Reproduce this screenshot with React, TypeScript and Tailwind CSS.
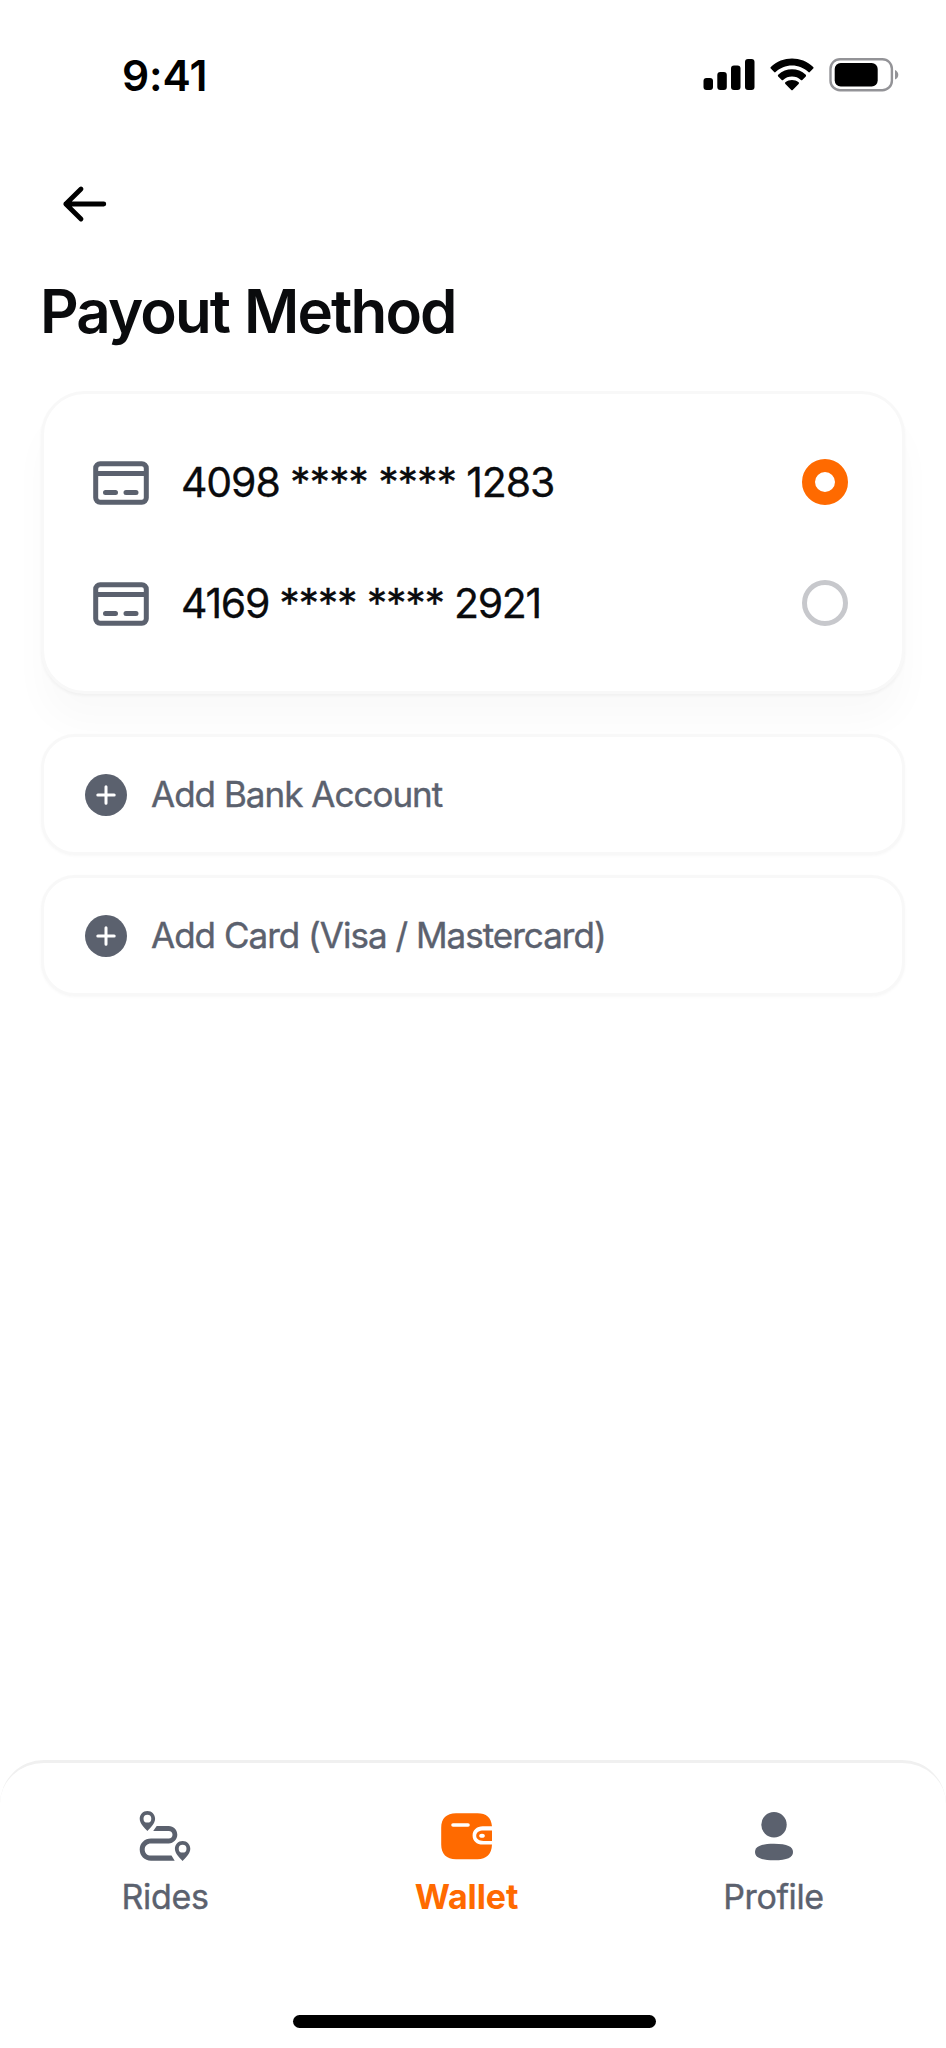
import React from "react";

const cards = [
  { number: "4098 **** **** 1283", selected: true, tracking: "tracking-[-1.120px]" },
  { number: "4169 **** **** 2921", selected: false, tracking: "tracking-[-1.280px]" },
];

const actions = ["Add Bank Account", "Add Card (Visa / Mastercard)"];

function StatusBar() {
  return (
    <header className="flex h-[148px] items-start justify-between pt-[51px] pr-[45px] pl-[122px]">
      <span className="text-[42.500px] leading-[50px] font-semibold tracking-[-0.100px] text-black">9:41</span>
      <svg className="mt-[3px] h-[40px] w-[198px]" viewBox="0 0 198 40" fill="none">
        <g fill="#000">
          <rect x="0.500" y="24" width="9.500" height="12" rx="3" />
          <rect x="14.300" y="18" width="9.500" height="18" rx="3" />
          <rect x="28" y="11.500" width="9.500" height="24.500" rx="3" />
          <rect x="42" y="5" width="9.500" height="31" rx="3" />
          <path d="M89 11.500c6.200 0 12 2.400 16.400 6.600.4.4 1 .4 1.400 0l3.400-3.500c.5-.5.5-1.200 0-1.700-11.900-11.300-30.500-11.300-42.400 0-.5.5-.5 1.200 0 1.700l3.400 3.500c.4.4 1 .4 1.400 0 4.400-4.200 10.200-6.600 16.400-6.600z" />
          <path d="M89 22.600c3.300 0 6.500 1.200 8.900 3.300.4.4 1 .4 1.400 0l3.500-3.500c.4-.5.4-1.200 0-1.700-7.900-7.200-19.700-7.200-27.600 0-.5.5-.5 1.200 0 1.700l3.500 3.500c.4.4 1 .4 1.400 0 2.400-2.100 5.600-3.300 8.900-3.300z" />
          <path d="M95.600 29.900c.5-.5.5-1.200 0-1.600-3.800-3.200-9.400-3.200-13.200 0-.5.4-.5 1.100 0 1.600l5.900 6c.4.4 1 .4 1.400 0z" />
        </g>
        <rect x="127.500" y="5.200" width="61.400" height="31" rx="9.500" stroke="#939397" strokeWidth="2.400" />
        <rect x="131.700" y="9" width="43" height="23.500" rx="6" fill="#000" />
        <path d="M192 16v9.600c2-.8 3.300-2.700 3.300-4.800s-1.300-4-3.300-4.800z" fill="#939397" />
      </svg>
    </header>
  );
}

function CardIcon() {
  return (
    <svg className="mt-[3px] h-[44px] w-[56px] shrink-0" viewBox="0 0 56 44" fill="none" stroke="#5b616e" strokeWidth="5" strokeLinecap="round">
      <rect x="2.700" y="2.700" width="50.600" height="38.600" rx="4.500" />
      <path d="M3 12.500h50" strokeLinecap="butt" />
      <path d="M12.500 31.500h10M33 31.500h10" />
    </svg>
  );
}

function RidesIcon() {
  return (
    <svg className="h-[54px] w-[54px]" viewBox="0 0 54 54" fill="none">
      <path fill="#5b616e" fillRule="evenodd" d="M9.400 1C4.900 1 1.700 4.500 1.700 8.700c0 5 4.800 9 7.700 12.300 2.900-3.300 7.700-7.300 7.700-12.300C17.100 4.500 13.900 1 9.400 1zm0 3.800a3.900 3.900 0 1 1 0 7.800 3.900 3.900 0 0 1 0-7.800z" />
      <path fill="#5b616e" fillRule="evenodd" d="M44.600 31c-4.500 0-7.700 3.500-7.700 7.700 0 5 4.800 9 7.700 12.300 2.900-3.300 7.700-7.300 7.700-12.300 0-4.200-3.200-7.700-7.700-7.700zm0 3.800a3.900 3.900 0 1 1 0 7.800 3.900 3.900 0 0 1 0-7.800z" />
      <path fill="#5b616e" d="M18.700 16h12c4.800 0 8.600 3.800 8.600 8.800 0 4.700-3.800 8.600-8.600 8.600H13c-3.700 0-6.300 2.400-6.300 6.100s2.600 6.100 6.300 6.100h20.500l3.200 5.100H13C6.500 50.700 1.700 45.800 1.700 39.500s4.800-11 11.300-11h17.700c2.300 0 3.800-1.500 3.800-3.800s-1.500-3.800-3.800-3.800H15.200z" />
    </svg>
  );
}

function WalletIcon() {
  return (
    <svg className="h-[54px] w-[54px]" viewBox="0 0 54 54" fill="none">
      <path fill="#ff6a00" d="M16 3.200h21.500c8.700 0 13.800 4.300 14.500 13H42.800c-6.200 0-10.200 4-10.200 9.200s4 9.200 10.200 9.200H52c-.4 9.800-5.500 14.600-14.500 14.600H16C6.500 49.200 1.200 44 1.200 34.500V17.800C1.200 8.400 6.500 3.200 16 3.200z" />
      <path fill="#ff6a00" d="M52 20.500h-8.500c-4.300 0-7.300 1.900-7.300 5.200s3 5.200 7.300 5.200H52z" />
      <ellipse cx="42" cy="25.700" rx="2.800" ry="2" fill="#fff" />
      <path d="M13 15h15" stroke="#fff" strokeWidth="3.600" strokeLinecap="round" />
    </svg>
  );
}

function ProfileIcon() {
  return (
    <svg className="h-[54px] w-[54px]" viewBox="0 0 54 54" fill="#5b616e">
      <circle cx="27" cy="14.700" r="12.700" />
      <path d="M27 33.700c13.500 0 19 3 19 8.300s-5.500 8.300-19 8.300S8 47.300 8 42s5.500-8.300 19-8.300z" />
    </svg>
  );
}

export default function App() {
  return (
    <div className="flex h-[2048px] w-[946px] flex-col overflow-hidden bg-white font-['Inter',sans-serif] text-[#0a0b0d]">
      <StatusBar />
      <main className="flex flex-1 flex-col px-[41px]">
        <button className="ml-[20px] flex h-[112px] w-[48px] items-center" aria-label="Back">
          <svg className="h-[40px] w-[48px]" viewBox="0 0 48 40" fill="none" stroke="#000" strokeWidth="4.800" strokeLinecap="round" strokeLinejoin="round">
            <path d="M42.800 20H4.800M20 5L4.800 20L20 35" />
          </svg>
        </button>
        <h1 className="mt-[15px] -ml-px text-[60px] leading-[72px] font-semibold tracking-[-1.850px] [word-spacing:1.500px]">Payout Method</h1>

        <section className="mt-[44px] flex h-[303px] flex-col rounded-[44px] border-[3px] border-[#f8f8f8] bg-white pt-[27px] pr-[54px] pl-[49px] shadow-[0_2px_3px_rgba(0,0,0,0.04),0_30px_36px_rgba(0,0,0,0.022)]">
          {cards.map((card) => (
            <div key={card.number} className="flex h-[121px] items-center">
              <CardIcon />
              <span className={`mt-px ml-[32px] flex-1 text-[41px] leading-[48px] [-webkit-text-stroke:0.3px_#0a0b0d] ${card.tracking}`}>{card.number}</span>
              <span className={card.selected ? "size-[46px] rounded-full border-[13px] border-[#ff6a00]" : "size-[46px] rounded-full border-[5px] border-[#c7c8cc]"} />
            </div>
          ))}
        </section>

        <div className="mt-[40px] flex flex-col gap-[20px]">
          {actions.map((label) => (
            <button key={label} className="flex h-[121px] items-center rounded-[34px] border-[3px] border-[#f8f8f8] bg-white pl-[41px] text-left shadow-[0_1px_3px_rgba(0,0,0,0.03)]">
              <svg className="size-[42px]" viewBox="0 0 42 42">
                <circle cx="21" cy="21" r="21" fill="#5b616e" />
                <path d="M21 12.800v16.400M12.800 21h16.400" stroke="#fff" strokeWidth="3" strokeLinecap="round" />
              </svg>
              <span className="-mt-px ml-[24px] text-[35px] leading-[44px] tracking-[-0.990px] text-[#5b616e] [-webkit-text-stroke:0.4px_#5b616e]">{label}</span>
            </button>
          ))}
        </div>
      </main>

      <nav className="flex h-[288px] flex-col items-center rounded-t-[44px] border-t-[3px] border-[#f0f0f0]">
        <div className="flex h-[252px] w-full justify-between pt-[47px] pr-[91px] pl-[84px] text-[34px] leading-[42px] text-[#5b616e]">
          <a className="flex w-[162px] flex-col items-center">
            <RidesIcon />
            <span className="mt-[12px] tracking-[-0.300px] [-webkit-text-stroke:0.4px_#5b616e]">Rides</span>
          </a>
          <a className="-ml-[5px] flex w-[162px] flex-col items-center">
            <WalletIcon />
            <span className="mt-[12px] -ml-px font-bold tracking-[-0.100px] text-[#ff6a00]">Wallet</span>
          </a>
          <a className="flex w-[162px] flex-col items-center">
            <ProfileIcon />
            <span className="mt-[12px] -ml-px tracking-[-0.400px] [-webkit-text-stroke:0.4px_#5b616e]">Profile</span>
          </a>
        </div>
        <div className="ml-[2px] h-[13px] w-[363px] rounded-full bg-black" />
      </nav>
    </div>
  );
}
